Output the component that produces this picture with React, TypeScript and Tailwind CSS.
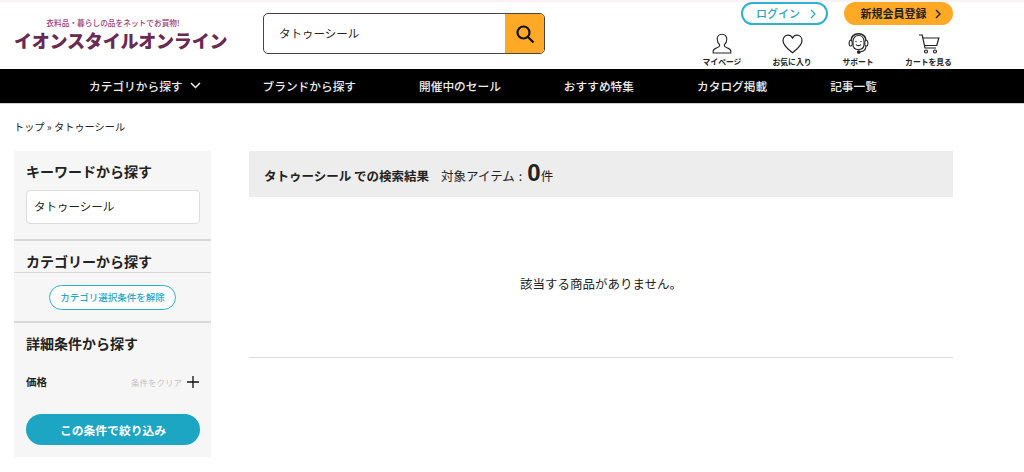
const font = { fontFamily: '"Noto Sans CJK JP", "Noto Sans", sans-serif' };

function UserIcon() {
  return (
    <svg width="20" height="21" viewBox="0 0 20 21" fill="none" stroke="#222" strokeWidth="1.1">
      <path d="M10 1.200c-3 0-4.800 2.200-4.800 5 0 2.400 1 4.200 2.400 5.400v1.200c0 .8-1 1.300-2.600 2C3 15.600 1.200 16.500 1.200 18.200v1.800h17.600v-1.800c0-1.700-1.800-2.600-3.800-3.400-1.600-.7-2.600-1.200-2.600-2v-1.200c1.400-1.200 2.400-3 2.400-5.400 0-2.800-1.800-5-4.800-5z" />
    </svg>
  );
}
function HeartIcon() {
  return (
    <svg width="21" height="20" viewBox="0 0 21 20" fill="none" stroke="#222" strokeWidth="1.2">
      <path d="M10.500 18.800C6 15 1 11.500 1 6.400 1 3.300 3.300 1.200 6 1.200c2 0 3.500 1 4.500 2.800 1-1.800 2.500-2.800 4.500-2.800 2.700 0 5 2.100 5 5.200 0 5.100-5 8.600-9.500 12.400z" />
    </svg>
  );
}
function SupportIcon() {
  return (
    <svg width="21" height="21" viewBox="0 0 21 21" fill="none" stroke="#222" strokeWidth="1.1">
      <path d="M5 8.500c0-3.600 2.300-6 5.500-6s5.500 2.400 5.500 6v3c0 3-2.300 5-5.500 5S5 14.500 5 11.500z" />
      <path d="M3 10V7.500C3 3.500 6.200.8 10.500.8S18 3.500 18 7.500V10" strokeWidth="1.500" />
      <rect x="1.200" y="7.500" width="3" height="5.500" rx="1.500" fill="#fff" />
      <rect x="16.800" y="7.500" width="3" height="5.500" rx="1.500" fill="#fff" />
      <path d="M18 13c0 3.500-2.500 5.500-6 6" />
      <circle cx="10.800" cy="19" r="1.300" fill="#222" />
      <path d="M8 11.500c1.200 1.500 3.800 1.500 5 0" />
      <circle cx="8" cy="8.500" r=".7" fill="#222" stroke="none" />
      <circle cx="13" cy="8.500" r=".7" fill="#222" stroke="none" />
    </svg>
  );
}
function CartIcon() {
  return (
    <svg width="22" height="20" viewBox="0 0 22 20" fill="none" stroke="#222" strokeWidth="1.200">
      <path d="M1 1h3.200l2.800 13h11" />
      <path d="M4.800 4h16l-2 7.500H6.400" />
      <circle cx="8" cy="17.500" r="1.500" />
      <circle cx="17" cy="17.500" r="1.500" />
    </svg>
  );
}

function HeaderIcon({ icon, label, width }: { icon: React.ReactNode; label: string; width: string }) {
  return (
    <div className={`flex flex-col items-center ${width}`}>
      <div className="h-[22px] flex items-end">{icon}</div>
      <span className="text-[7.800px] leading-[10px] mt-[3px] font-bold text-[#222] whitespace-nowrap">{label}</span>
    </div>
  );
}

const navItems = ["ブランドから探す", "開催中のセール", "おすすめ特集", "カタログ掲載", "記事一覧"];

export default function App() {
  return (
    <div className="w-[1024px] h-[472px] bg-white overflow-hidden text-[#222]" style={font}>
      <div className="h-[2px] bg-[#f8f3f5]" />
      <header className="h-[67px] flex pl-[14px]">
        <div className="w-[249px] flex flex-col items-start pt-[15px]">
          <div className="w-[198px] text-center text-[7.700px] leading-[11px] text-[#a0417c] font-medium whitespace-nowrap">衣料品・暮らしの品をネットでお買物!</div>
          <div className="text-[18px] leading-[24px] font-black text-[#692a54] whitespace-nowrap tracking-[-0.200px]">イオンスタイルオンライン</div>
        </div>
        <div className="w-[282px] h-[41px] mt-[11px] flex border border-[#444] rounded-[5px] overflow-hidden">
          <div className="flex-1 flex items-center pl-[15px] text-[11.500px]">タトゥーシール</div>
          <div className="w-[39px] bg-[#ffa927] flex items-center justify-center">
            <svg width="20" height="20" viewBox="0 0 20 20" fill="none" stroke="#111" strokeWidth="2.200">
              <circle cx="8.500" cy="8.500" r="6" />
              <path d="M13 13l5.500 5.500" />
            </svg>
          </div>
        </div>
        <div className="ml-[142px] w-[281px] flex flex-col">
          <div className="flex justify-end gap-[16px] pr-[15px]">
            <div className="w-[87px] h-[23px] rounded-full border-2 border-[#2fb0cf] flex items-center justify-center gap-[10px] pl-[3px] text-[11px] font-medium text-[#27a6c6]">
              ログイン
              <svg width="6" height="10" viewBox="0 0 6 10" fill="none" stroke="#27a6c6" strokeWidth="1.200"><path d="M1 1l4 4-4 4" /></svg>
            </div>
            <div className="w-[109px] h-[23px] rounded-full bg-[#ffa927] flex items-center justify-center gap-[8px] pl-[4px] text-[11px] font-bold text-[#222]">
              新規会員登録
              <svg width="6" height="10" viewBox="0 0 6 10" fill="none" stroke="#222" strokeWidth="1.400"><path d="M1 1l4 4-4 4" /></svg>
            </div>
          </div>
          <div className="flex mt-[7px]">
            <HeaderIcon icon={<UserIcon />} label="マイページ" width="w-[70px]" />
            <HeaderIcon icon={<HeartIcon />} label="お気に入り" width="w-[70px]" />
            <HeaderIcon icon={<SupportIcon />} label="サポート" width="w-[62px]" />
            <HeaderIcon icon={<CartIcon />} label="カートを見る" width="w-[79px]" />
          </div>
        </div>
      </header>
      <nav className="h-[35px] bg-black border-b border-[#ccc] flex items-center pl-[89px] pb-[1px] text-[11.700px] text-[#eee] font-medium whitespace-nowrap">
        <span>カテゴリから探す</span>
        <svg className="ml-[7px] mr-[62px]" width="11" height="7" viewBox="0 0 11 7" fill="none" stroke="#eee" strokeWidth="1.500"><path d="M1 1l4.500 4.500L10 1" /></svg>
        <div className="flex gap-[63px]">
          {navItems.map((n) => <span key={n}>{n}</span>)}
        </div>
      </nav>
      <div className="pl-[14px] pt-[16px] h-[47px] text-[10.200px] leading-[14px]">トップ » タトゥーシール</div>
      <div className="flex pl-[14px]">
        <aside className="w-[197px] h-[306px] bg-[#f6f6f6] flex flex-col">
          <div className="h-[90px] border-b-2 border-[#d9d9d9] px-[12px] pt-[10px]">
            <div className="text-[14px] leading-[20px] font-bold">キーワードから探す</div>
            <div className="mt-[9px] w-[174px] h-[34px] bg-white border border-[#ddd] rounded-[4px] flex items-center pl-[7px] text-[11.500px]">タトゥーシール</div>
          </div>
          <div className="h-[32px] border-b border-[#d9d9d9] px-[12px] pt-[10px]">
            <div className="text-[14px] leading-[20px] font-bold">カテゴリーから探す</div>
          </div>
          <div className="h-[50px] border-b-2 border-[#d9d9d9] flex justify-center pt-[12px]">
            <div className="w-[127px] h-[25px] rounded-full bg-white border border-[#2fb0cf] flex items-center justify-center text-[9.500px] font-medium text-[#27a6c6]">カテゴリ選択条件を解除</div>
          </div>
          <div className="px-[12px] pt-[10px]">
            <div className="text-[14px] leading-[20px] font-bold">詳細条件から探す</div>
            <div className="mt-[20px] h-[18px] flex items-center justify-between">
              <span className="text-[10.500px] font-bold">価格</span>
              <span className="flex items-center gap-[5px] text-[8.500px] text-[#c4c4c4]">
                条件をクリア
                <svg width="12" height="12" viewBox="0 0 12 12" stroke="#111" strokeWidth="1.300"><path d="M6 0v12M0 6h12" /></svg>
              </span>
            </div>
            <div className="mt-[23px] w-[174px] h-[31px] rounded-full bg-[#1ca6c4] flex items-center justify-center text-[11.800px] font-bold text-white">この条件で絞り込み</div>
          </div>
        </aside>
        <main className="ml-[38px] w-[704px]">
          <div className="h-[46px] bg-[#ededed] flex items-center pl-[15px] pt-[5px] whitespace-nowrap">
            <span className="text-[12.500px] font-bold">タトゥーシール での検索結果</span>
            <span className="ml-[12px] mb-[7px] text-[12.500px] flex items-baseline">対象アイテム<span className="mx-[4px]">:</span><span className="ml-[1px] text-[24px] leading-[28px] font-bold font-['Liberation_Sans']">0</span>件</span>
          </div>
          <div className="h-[161px] border-b border-[#d9d9d9] flex items-center justify-center text-[12.500px] pt-[15px]">該当する商品がありません。</div>
        </main>
      </div>
    </div>
  );
}
